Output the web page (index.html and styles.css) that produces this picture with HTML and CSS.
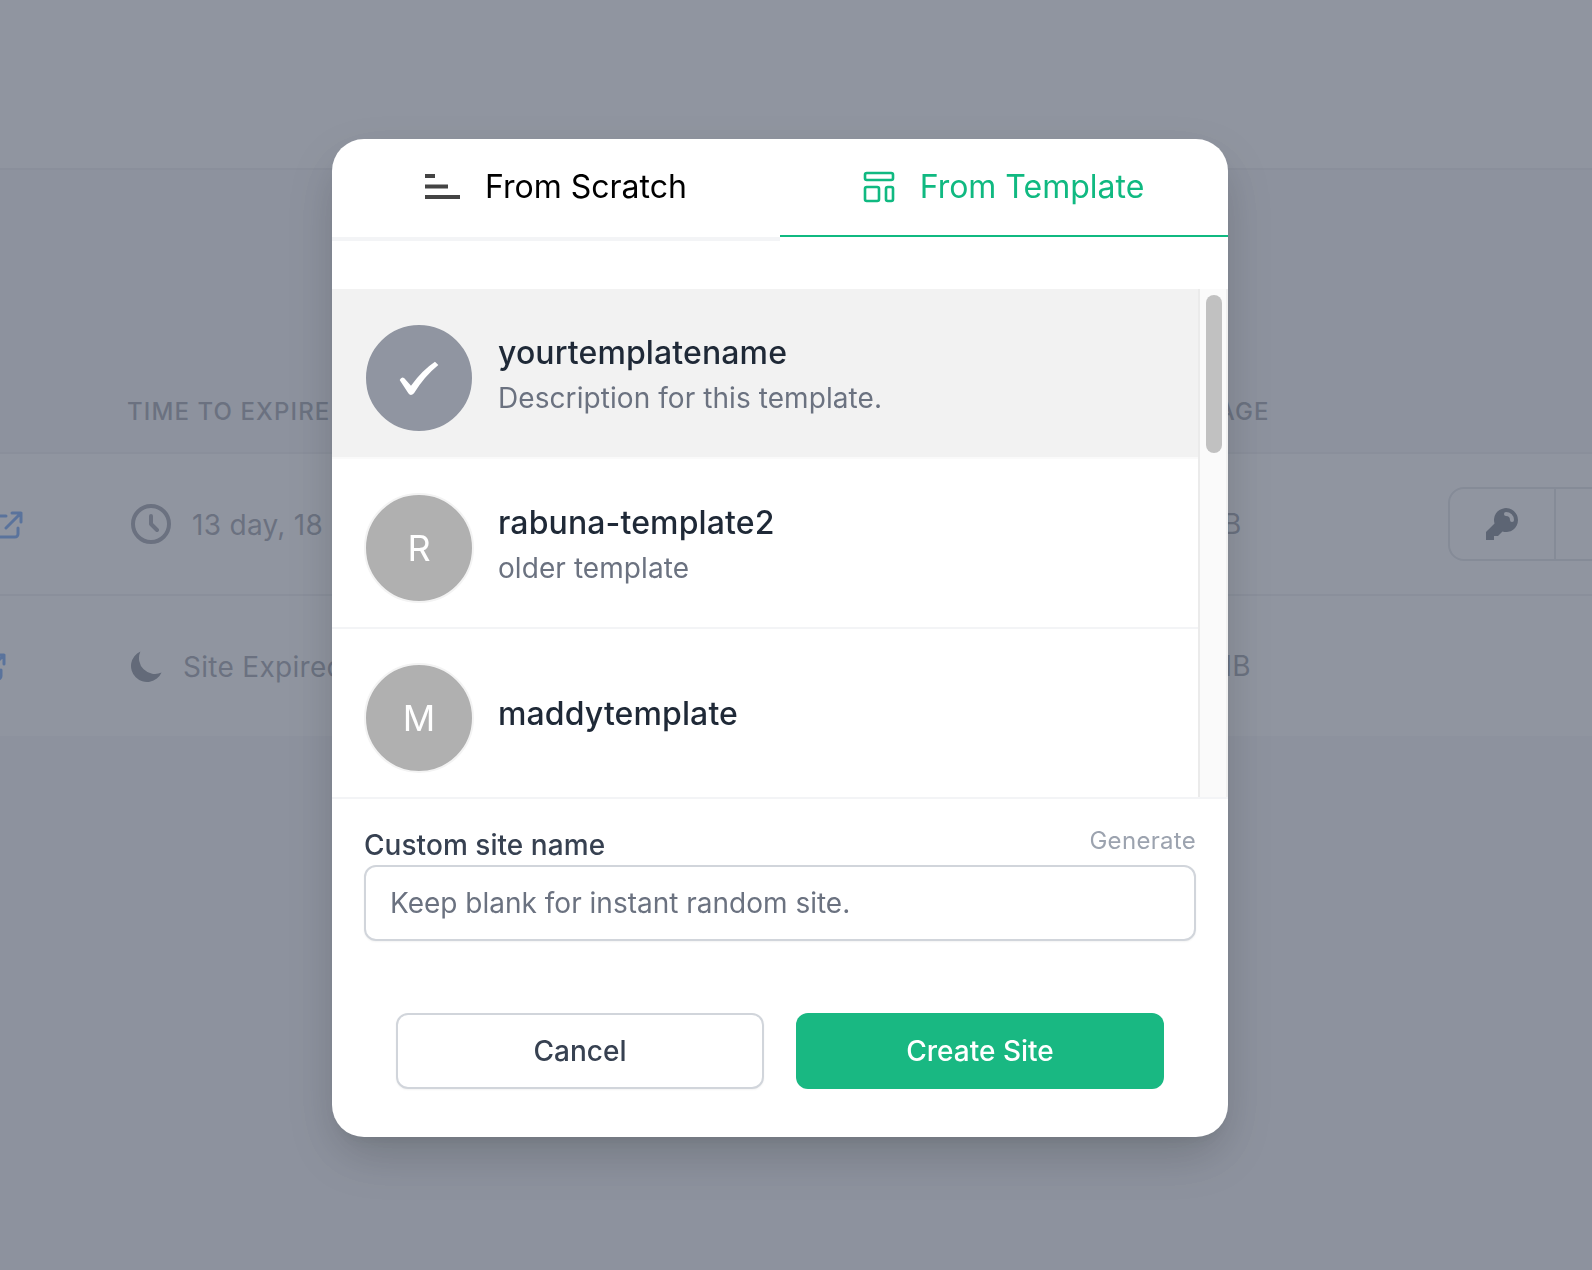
FILE: index.html
```html
<!DOCTYPE html>
<html lang="en">
<head>
<meta charset="utf-8">
<title>Create Site</title>
<link rel="stylesheet" href="styles.css">
</head>
<body>
<div class="page">
  <header class="topbar"></header>
  <main class="sites">
    <div class="thead">
      <div class="c-link"></div>
      <div class="c-time">TIME TO EXPIRE</div>
      <div class="c-size">STORAGE</div>
    </div>
    <div class="row">
      <div class="c-link">
        <svg class="ext" viewBox="0 0 24 24"><path d="M10 6H6a2 2 0 00-2 2v10a2 2 0 002 2h10a2 2 0 002-2v-4M14 4h6m0 0v6m0-6L10 14"/></svg>
      </div>
      <div class="c-time">
        <svg class="clock" viewBox="0 0 24 24"><path d="M12 8v4l3 3m6-3a9 9 0 11-18 0 9 9 0 0118 0z"/></svg>
        <span class="time-text">13 day, 18</span>
      </div>
      <div class="c-size c-size-gb">2.5 GB</div>
      <div class="actions">
        <div class="action">
          <svg class="key" viewBox="0 0 20 20"><path fill-rule="evenodd" d="M18 8a6 6 0 01-7.743 5.743L10 14l-1 1-1 1H6v2H2v-4l4.257-4.257A6 6 0 1118 8zm-6-4a1 1 0 100 2 2 2 0 012 2 1 1 0 102 0 4 4 0 00-4-4z"/></svg>
        </div>
        <div class="action"></div>
      </div>
    </div>
    <div class="row">
      <div class="c-link">
        <svg class="ext ext-shift" viewBox="0 0 24 24"><path d="M10 6H6a2 2 0 00-2 2v10a2 2 0 002 2h10a2 2 0 002-2v-4M14 4h6m0 0v6m0-6L10 14"/></svg>
      </div>
      <div class="c-time">
        <svg class="moon" viewBox="0 0 20 20"><path d="M17.293 13.293A8 8 0 016.707 2.707a8.001 8.001 0 1010.586 10.586z"/></svg>
        <span class="time-text">Site Expired</span>
      </div>
      <div class="c-size c-size-mb">11.4 MB</div>
    </div>
  </main>
</div>

<div class="overlay">
  <section class="modal">
    <nav class="tabs">
      <div class="tab">
        <svg class="i-scratch" viewBox="0 0 36 26"><rect x="0" y="0" width="10" height="4"/><rect x="0" y="10.5" width="23" height="4"/><rect x="0" y="21" width="35" height="4"/></svg>
        <span class="tab-label">From Scratch</span>
      </div>
      <div class="tab tab-active">
        <svg class="i-template" viewBox="0 0 24 24"><path d="M4 5a1 1 0 011-1h14a1 1 0 011 1v2a1 1 0 01-1 1H5a1 1 0 01-1-1V5zM4 13a1 1 0 011-1h6a1 1 0 011 1v6a1 1 0 01-1 1H5a1 1 0 01-1-1v-6zM16 13a1 1 0 011-1h2a1 1 0 011 1v6a1 1 0 01-1 1h-2a1 1 0 01-1-1v-6z"/></svg>
        <span class="tab-label">From Template</span>
      </div>
    </nav>

    <div class="picker">
      <div class="items">
        <div class="item item-selected">
          <div class="avatar avatar-selected">
            <svg class="check" viewBox="120 120 120 110"><path d="M122 180Q128 168 136 175L156 197Q190 150 228 125L238 135Q195 170 165 220Q155 230 148 220Z"/></svg>
          </div>
          <div class="info">
            <div class="name">yourtemplatename</div>
            <div class="desc">Description for this template.</div>
          </div>
        </div>
        <div class="item">
          <div class="avatar">R</div>
          <div class="info">
            <div class="name">rabuna-template2</div>
            <div class="desc">older template</div>
          </div>
        </div>
        <div class="item">
          <div class="avatar">M</div>
          <div class="info">
            <div class="name">maddytemplate</div>
            <div class="desc desc-empty"></div>
          </div>
        </div>
      </div>
      <div class="track"><div class="thumb"></div></div>
    </div>

    <div class="form">
      <div class="label-row">
        <label class="label" for="site">Custom site name</label>
        <span class="generate">Generate</span>
      </div>
      <input class="input" id="site" type="text" placeholder="Keep blank for instant random site.">
    </div>

    <div class="buttons">
      <button class="btn btn-cancel" type="button">Cancel</button>
      <button class="btn btn-create" type="button">Create Site</button>
    </div>
  </section>
</div>
</body>
</html>
```
FILE: styles.css
```css
* { box-sizing: border-box; }
html, body { margin: 0; height: 100%; overflow: hidden; }
body { font-family: Inter, "Noto Sans", sans-serif; color: #1f2937; }

.page { height: 1270px; background: #f1f3f6; overflow: hidden; }
.topbar { height: 170px; background: #fff; border-bottom: 2px solid #e5e7eb; }

.sites { display: flex; flex-direction: column; }
.thead {
  height: 282px;
  display: flex;
  align-items: flex-end;
  padding-bottom: 26px;
  font-size: 24px;
  font-weight: 500;
  letter-spacing: 1.1px;
  color: #6b7280;
}
.row {
  height: 142px;
  display: flex;
  align-items: center;
  background: #fff;
  border-top: 2px solid #e5e7eb;
  font-size: 28px;
  color: #6b7280;
}
.c-link { width: 127px; flex: none; position: relative; height: 36px; }
.thead .c-link { height: 0; }
.c-time { width: 1022px; flex: none; display: flex; align-items: center; white-space: nowrap; }
.time-text { letter-spacing: 0.3px; padding-top: 2px; }
.c-size { width: 160px; flex: none; white-space: nowrap; }
.c-size-gb { letter-spacing: 0.7px; }
.c-size-mb { letter-spacing: 0.2px; }
.ext { width: 36px; height: 36px; fill: none; stroke: #2a78f0; stroke-width: 2; stroke-linecap: round; stroke-linejoin: round; margin: 1px 0 0 -9px; display: block; }
.ext-shift { margin-left: -26px; }
.clock { width: 48px; height: 48px; fill: none; stroke: #6b7280; stroke-width: 2; stroke-linecap: round; stroke-linejoin: round; margin-right: 17px; flex: none; }
.moon { width: 40px; height: 40px; fill: #4b5563; margin-right: 16px; flex: none; }
.actions { display: flex; height: 74px; width: 260px; flex: none; border: 2px solid #d1d5db; border-radius: 16px; margin-left: 139px; }
.action { width: 106px; flex: none; display: flex; align-items: center; justify-content: center; border-right: 2px solid #d1d5db; }
.key { width: 40px; height: 40px; fill: #374151; }

.overlay {
  position: fixed;
  inset: 0;
  background: rgba(107, 114, 128, 0.75);
  display: flex;
  justify-content: center;
  align-items: flex-start;
  padding: 139px 32px 0 0;
}
.modal {
  width: 896px;
  height: 998px;
  background: #fff;
  border-radius: 32px;
  overflow: hidden;
  box-shadow: 0 20px 50px -5px rgba(0, 0, 0, 0.2), 0 10px 10px -5px rgba(0, 0, 0, 0.04);
  flex: none;
}

.tabs { display: grid; grid-template-columns: 1fr 1fr; align-items: start; height: 150px; }
.tab {
  height: 102px;
  display: flex;
  align-items: center;
  justify-content: center;
  padding-bottom: 2px;
  font-size: 32px;
  color: #000;
  border-bottom: 4px solid #f3f4f6;
}
.tab-active { height: 98px; padding: 0 6px 0 0; color: #10b981; border-bottom: 2px solid #10b981; }
.i-scratch { width: 36px; height: 26px; fill: #444; margin-right: 24px; flex: none; }
.i-template { width: 42px; height: 42px; fill: none; stroke: #10b981; stroke-width: 1.5; stroke-linecap: round; stroke-linejoin: round; margin-right: 20px; flex: none; }
.tab-label { margin-bottom: 1px; }

.picker { display: flex; height: 510px; border-bottom: 2px solid #f3f4f6; }
.items { flex: 1; min-width: 0; overflow: hidden; }
.item {
  height: 170px;
  display: flex;
  align-items: flex-start;
  padding: 34px 32px 0 32px;
  border-bottom: 2px solid #f3f4f6;
}
.item-selected { background: #f2f2f2; border-bottom-color: #fafafa; }
.item:last-child { border-bottom: 0; }
.avatar {
  width: 110px;
  height: 110px;
  flex: none;
  border-radius: 50%;
  border: 2px solid #f3f3f3;
  background: #b0b0b0;
  color: #fff;
  display: flex;
  align-items: center;
  justify-content: center;
  font-size: 36px;
  margin-right: 24px;
}
.avatar-selected { background: #9095a1; border-color: #f2f2f2; }
.check { width: 40px; height: 36.67px; fill: #fff; margin-right: 1px; }
.info { height: 105px; display: flex; flex-direction: column; justify-content: center; }
.name { font-size: 32px; font-weight: 500; line-height: 44px; margin-bottom: 1px; color: #1f2937; letter-spacing: 0.12px; }
.desc { font-size: 28px; line-height: 44px; color: #6b7280; letter-spacing: 0.07px; }
.desc-empty { height: 3px; }

.track { width: 30px; flex: none; background: #fafafa; border-left: 2px solid #ebebeb; border-right: 2px solid #f0f0f0; padding: 6px 4px 0 6px; }
.thumb { height: 158px; border-radius: 8px; background: #c1c1c1; }

.form { padding: 25px 32px 0; }
.label-row { display: flex; justify-content: space-between; align-items: flex-start; height: 41px; }
.label { font-size: 28px; font-weight: 500; line-height: 42px; color: #374151; letter-spacing: 0.05px; }
.generate { font-size: 24px; line-height: 34px; color: #9ca3af; letter-spacing: 0.3px; }
.input {
  display: block;
  width: 100%;
  height: 76px;
  border: 2px solid #d1d5db;
  border-radius: 12px;
  padding: 0 24px;
  font: 28px Inter, sans-serif;
  color: #374151;
  box-shadow: 0 1px 2px rgba(0, 0, 0, 0.05);
  outline: none;
}
.input::placeholder { color: #6b7280; opacity: 1; }

.buttons { display: grid; grid-template-columns: 1fr 1fr; gap: 32px; padding: 72px 64px 0; }
.btn { height: 76px; border-radius: 12px; font: 500 28px Inter, sans-serif; }
.btn-cancel { background: #fff; border: 2px solid #d1d5db; color: #374151; box-shadow: 0 1px 2px rgba(0, 0, 0, 0.05); }
.btn-create { background: #19b882; border: 0; color: #fff; }
```
